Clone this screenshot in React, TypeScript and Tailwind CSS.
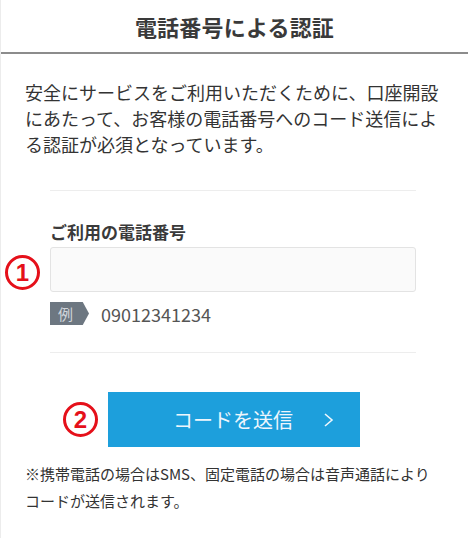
import React from "react";

const jp = { fontFamily: '"Noto Sans CJK JP", "Noto Sans", sans-serif' };

function StepMark({ n }: { n: string }) {
  return (
    <div className="w-[35px] h-[35px] rounded-full border-[3px] border-[#e5101a] flex items-center justify-center">
      <span
        className="text-[24px] font-bold leading-none text-[#e5101a]"
        style={{ fontFamily: '"Liberation Sans", Arial, sans-serif' }}
      >
        {n}
      </span>
    </div>
  );
}

export default function App() {
  return (
    <div
      className="w-[468px] h-[538px] bg-white text-[#333] border-l border-[#ececec] flex flex-col"
      style={jp}
    >
      <div className="h-[54px] flex items-center justify-center border-b-2 border-[#8c8c8c]">
        <h1 className="text-[22px] font-bold text-[#3a3a3a] tracking-[0.2px]">
          電話番号による認証
        </h1>
      </div>

      <p className="mt-[25px] px-[24px] text-[18px] leading-[26px] text-[#333] whitespace-nowrap">
        安全にサービスをご利用いただくために、口座開設
        <br />
        にあたって、お客様の電話番号へのコード送信によ
        <br />
        る認証が必須となっています。
      </p>

      <div className="mt-[33px] flex">
        <div className="w-[49px] pt-[65px] pl-[4px]">
          <StepMark n="1" />
        </div>
        <div className="w-[366px] border-t border-b border-[#ededed] pt-[29px] pb-[27px]">
          <label className="block text-[17px] font-bold leading-[24px] text-[#3a3a3a] mb-[3px]">
            ご利用の電話番号
          </label>
          <input
            type="tel"
            className="block w-full h-[45px] bg-[#fafafa] border border-[#e3e3e3] rounded-[3px] outline-none px-3"
          />
          <div className="mt-[10px] flex items-center gap-[12px]">
            <div className="w-[39px] h-[23px] bg-[#6d7781] [clip-path:polygon(0_0,84%_0,100%_50%,84%_100%,0_100%)] flex items-center pl-[8px]">
              <span className="text-[15px] leading-none text-[#cfd4d9]">例</span>
            </div>
            <span className="text-[18px] text-[#555] leading-none">09012341234</span>
          </div>
        </div>
      </div>

      <div className="mt-[39px] pl-[62px] flex items-center gap-[10px]">
        <StepMark n="2" />
        <button className="w-[252px] h-[55px] bg-[#1d9fdc] flex items-center pl-[65px] gap-[30px]">
          <span className="text-[20px] text-[#eef6fc] leading-none">コードを送信</span>
          <svg width="11" height="16" viewBox="0 0 11 16" fill="none">
            <polyline points="2,2 9,8 2,14" stroke="#eef6fc" strokeWidth="1.6" />
          </svg>
        </button>
      </div>

      <p className="mt-[13px] px-[24px] text-[15px] leading-[27px] text-[#333] whitespace-nowrap">
        ※携帯電話の場合はSMS、固定電話の場合は音声通話により
        <br />
        コードが送信されます。
      </p>
    </div>
  );
}
